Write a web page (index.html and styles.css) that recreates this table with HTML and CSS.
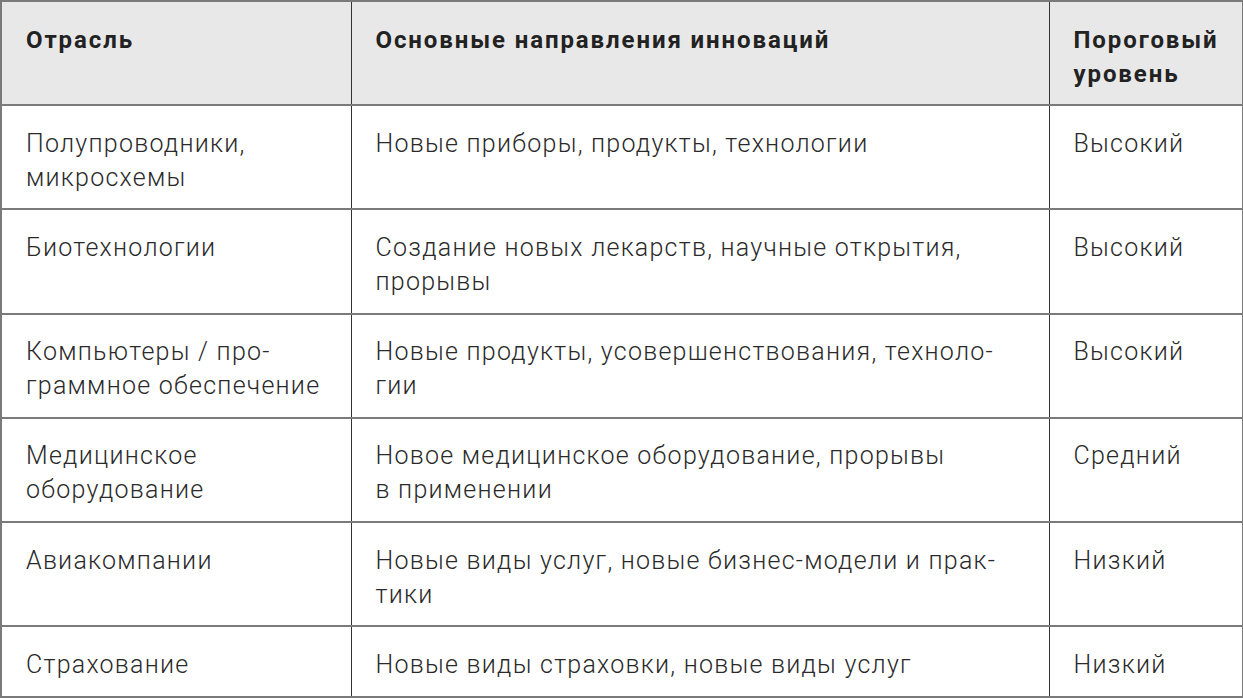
FILE: index.html
```html
<!DOCTYPE html>
<html lang="ru">
<head>
<meta charset="utf-8">
<link rel="stylesheet" href="styles.css">
</head>
<body>
<table class="grid">
  <colgroup>
    <col class="c1"><col class="c2"><col class="c3">
  </colgroup>
  <thead>
    <tr>
      <th>Отрасль</th>
      <th>Основные направления инноваций</th>
      <th>Пороговый<br>уровень</th>
    </tr>
  </thead>
  <tbody>
    <tr>
      <td>Полупроводники,<br>микросхемы</td>
      <td>Новые приборы, продукты, технологии</td>
      <td>Высокий</td>
    </tr>
    <tr>
      <td>Биотехнологии</td>
      <td>Создание новых лекарств, научные открытия,<br>прорывы</td>
      <td>Высокий</td>
    </tr>
    <tr>
      <td>Компьютеры / про-<br>граммное обеспечение</td>
      <td>Новые продукты, усовершенствования, техноло-<br>гии</td>
      <td>Высокий</td>
    </tr>
    <tr>
      <td>Медицинское<br>оборудование</td>
      <td>Новое медицинское оборудование, прорывы<br>в применении</td>
      <td>Средний</td>
    </tr>
    <tr>
      <td>Авиакомпании</td>
      <td>Новые виды услуг, новые бизнес-модели и прак-<br>тики</td>
      <td>Низкий</td>
    </tr>
    <tr>
      <td>Страхование</td>
      <td>Новые виды страховки, новые виды услуг</td>
      <td>Низкий</td>
    </tr>
  </tbody>
</table>
</body>
</html>
```
FILE: styles.css
```css
html, body {
  margin: 0;
  padding: 0;
  background: #ffffff;
}
.grid {
  border-collapse: collapse;
  table-layout: fixed;
  width: 1242px;
  font-family: Roboto, "Noto Sans", sans-serif;
  color: #2a2a2a;
}
.c1 { width: 350px; }
.c2 { width: 698px; }
.c3 { width: 194px; }
.grid th, .grid td {
  text-align: left;
  vertical-align: top;
  white-space: nowrap;
  padding: 20.5px 16px 13.8px 24px;
  font-size: 25px;
  line-height: 34px;
  letter-spacing: 1.25px;
  border-top: 2px solid #7a7a7a;
  border-bottom: 2px solid #7a7a7a;
  border-left: 1px solid #333333;
  border-right: 1px solid #333333;
}
.grid th {
  padding-top: 21px;
  padding-bottom: 13px;
  background: #e8e8e8;
  font-weight: 700;
  font-size: 24px;
  letter-spacing: 1.9px;
  color: #222222;
}
.grid td {
  font-weight: 300;
}
.grid tr > :first-child { border-left: 2px solid #7a7a7a; }
.grid tr > :last-child { border-right: 2px solid #7a7a7a; }
```
